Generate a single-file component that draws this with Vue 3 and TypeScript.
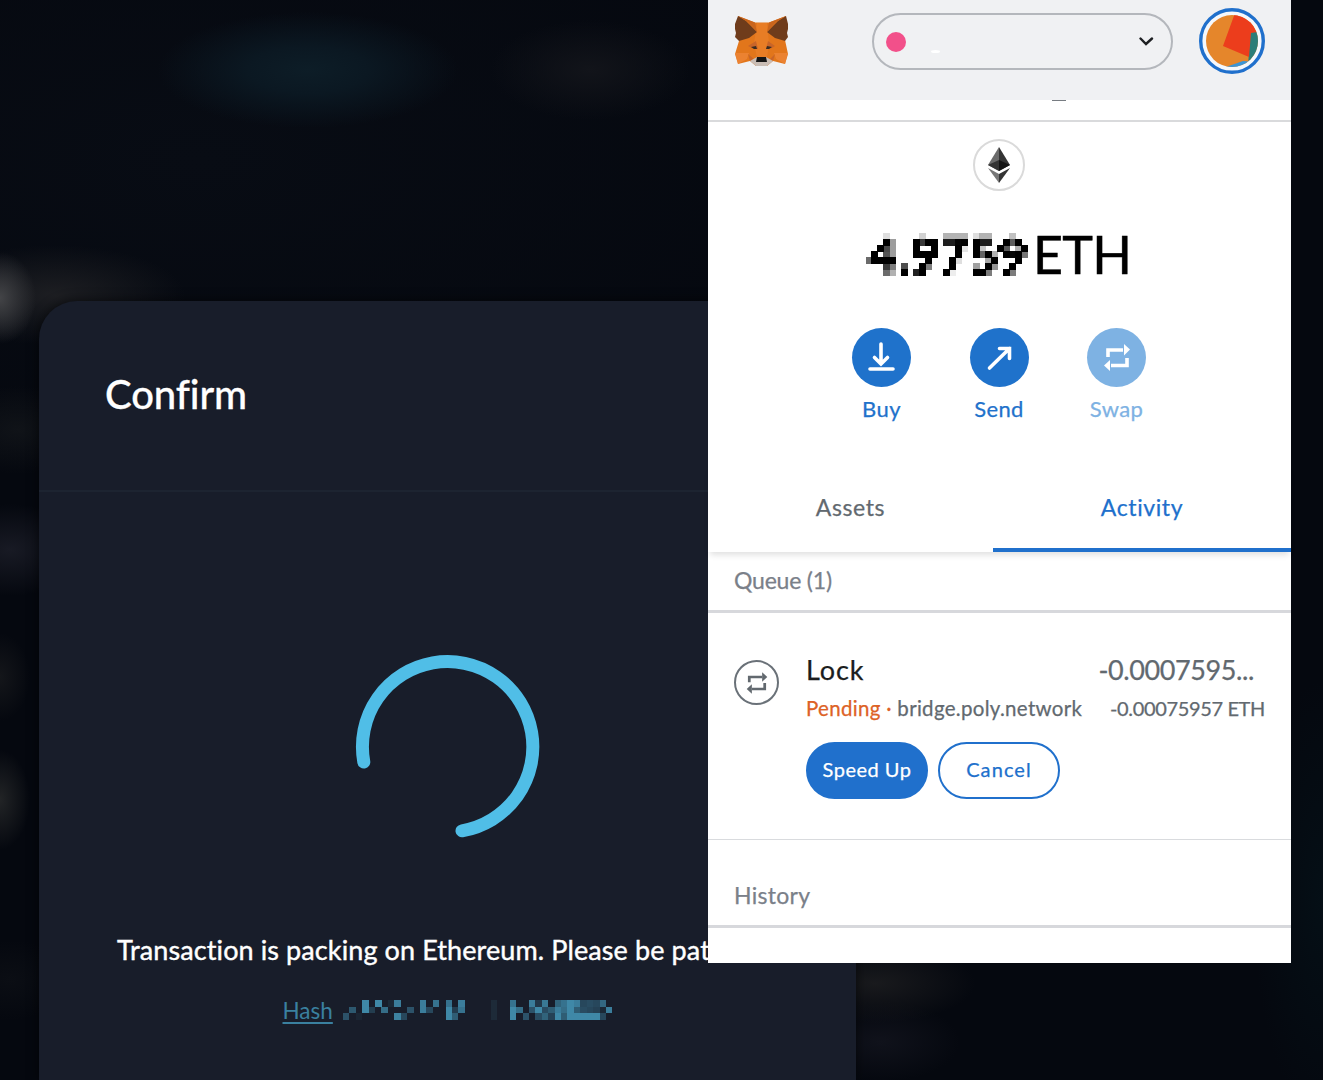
<script setup lang="ts">
type Cell = [col: number, row: number, opacity: number]

interface Action {
  label: string
  icon: 'buy' | 'send' | 'swap'
  disabled?: boolean
}

const actions: Action[] = [
  { label: 'Buy', icon: 'buy' },
  { label: 'Send', icon: 'send' },
  { label: 'Swap', icon: 'swap', disabled: true },
]

// Obscured part of the transaction hash, one entry per mosaic block.
const hashCells: Cell[] = [
  [0, 2, 0.5], [1, 1, 0.55], [2, 2, 0.08],
  [3, 0, 1], [3, 1, 1], [4, 1, 0.3], [5, 0, 1], [6, 1, 0.75], [7, 0, 0.1],
  [8, 0, 0.9], [8, 2, 0.95], [9, 2, 0.4], [10, 1, 0.5],
  [12, 0, 0.9], [12, 1, 0.9], [13, 1, 0.4], [14, 0, 0.8],
  [16, 0, 0.8], [16, 1, 1], [16, 2, 1], [17, 1, 0.3], [17, 2, 0.6], [18, 0, 0.9], [18, 1, 0.8],
  [23, 0, 0.12], [23, 1, 0.12], [23, 2, 0.12],
  [26, 0, 0.8], [26, 1, 1], [26, 2, 1], [27, 1, 0.75], [28, 2, 0.5],
  [29, 0, 0.9], [29, 1, 0.5], [30, 0, 0.25], [30, 1, 1], [31, 0, 0.85], [31, 1, 0.45], [31, 2, 0.65],
  [32, 1, 0.6], [30, 2, 0.45], [32, 2, 0.35], [33, 0, 0.65], [33, 1, 0.9], [33, 2, 1],
  [34, 0, 0.8], [34, 1, 0.75], [34, 2, 0.6], [35, 0, 1], [35, 1, 1], [35, 2, 1],
  [36, 0, 0.9], [36, 1, 0.6], [36, 2, 1], [37, 0, 0.4], [37, 1, 0.45], [37, 2, 1],
  [38, 0, 0.45], [38, 1, 0.4], [38, 2, 1], [39, 0, 0.4], [39, 1, 0.35], [39, 2, 1], [40, 0, 0.7], [40, 1, 0.1], [40, 2, 0.4], [41, 1, 0.9],
]
</script>

<template>
  <main class="screen">
    <section class="dialog">
      <header class="dialog-head"><h1>Confirm</h1></header>
      <div class="dialog-body">
        <svg class="spinner" width="186" height="186" viewBox="0 0 186 186">
          <path d="M8.8 108A85.2 85.2 0 1 1 107 176.8" />
        </svg>
        <p class="packing">Transaction is packing on Ethereum. Please be patient.</p>
        <div class="hash">
          <a>Hash</a>
          <svg width="275" height="20" viewBox="0 0 275 20" shape-rendering="crispEdges">
            <rect
              v-for="([col, row, opacity], i) in hashCells"
              :key="i"
              :x="col * 6.54"
              :y="row * 6.6"
              width="6.6"
              height="6.6"
              :opacity="opacity"
            />
          </svg>
        </div>
      </div>
    </section>

    <section class="wallet">
      <header class="topbar">
        <svg class="fox" width="56" height="52" viewBox="0 0 56 52">
          <path fill="#e2761b" d="M4 0 21 6.5H35L52 0 51 24 54 38 51 48 39 45 33 50H22L16 45 4 48 1 38 5 25Z" />
          <path fill="#ee8430" d="M23 7H33L35 27 33 42H23L20 27Z" opacity=".5" />
          <path fill="#6f3c1b" d="M4 0 12 5 23 16 15 22 5 25 1 21 2 17 1 13 1 8Z" />
          <path fill="#6f3c1b" d="M52 0 44 5 33 16 41 22 51 25 54 21 53 17 54 13 54 8Z" />
          <path fill="#c9651d" d="M4 0 21 6.5 23 16 14 6ZM52 0 35 6.5 33 16 42 6Z" />
          <path fill="#f0873a" opacity=".7" d="M1 37H15L13 43 4 48ZM54 37H40L42 43 51 48Z" />
          <path fill="#c96528" d="M14 30 22 25 24 33 18 32ZM41 30 34 25 32 33 38 32ZM14 38 20 43 16 45ZM41 38 36 43 39 45Z" />
          <path fill="#3a2c22" d="M17 31 22 30 23 33 20 33ZM38 31 33 30 32 33 35 33Z" />
          <path fill="#c9bdb5" d="M16 45 23 41H32L39 45 33 50H22Z" />
          <path fill="#161616" d="M23 41H32L33 46H22Z" />
        </svg>
        <div class="network">
          <i class="network-dot"></i>
          <i class="smudge"></i>
          <svg width="16" height="10" viewBox="0 0 16 10"><path d="M2.5 1.5 8 7 14 1.5" /></svg>
        </div>
        <svg class="avatar" width="66" height="66" viewBox="0 0 66 66">
          <defs><clipPath id="face"><circle cx="33" cy="33" r="26" /></clipPath></defs>
          <circle cx="33" cy="33" r="31.3" fill="#f5f8fc" stroke="#2070cc" stroke-width="3.4" />
          <g clip-path="url(#face)">
            <path fill="#e5862b" d="M0 0H66V66H0Z" />
            <path fill="#3b95d6" d="M24 60 44 53 56 54 50 66H24Z" />
            <path fill="#2b7d78" d="M51 24H66V60H49Z" />
            <path fill="#ec3d1c" d="M36 5 66 6 59 24 52 25 50 49 24 38Z" />
          </g>
        </svg>
      </header>
      <div class="accountbar"><i></i></div>

      <div class="overview">
        <div class="token">
          <svg width="22" height="36" viewBox="0 0 22 36">
            <path fill="#6b6b6b" d="M11 0V24L0 18Z" /><path fill="#343434" d="M11 0V24L22 18Z" />
            <path fill="#343434" d="M11 13 0 18 11 24Z" /><path fill="#141414" d="M11 13 22 18 11 24Z" />
            <path fill="#777" d="M0 21 11 27V36Z" /><path fill="#343434" d="M22 21 11 27V36Z" />
          </svg>
        </div>
        <div class="balance">
          <svg class="amount" width="164" height="64" viewBox="0 0 164 64">
            <defs>
              <filter id="pixelate" filterUnits="userSpaceOnUse" x="0" y="0" width="164" height="64">
                <feGaussianBlur in="SourceGraphic" stdDeviation="0.8" result="soft" />
                <feFlood x="2" y="2" width="1" height="1" flood-color="#000" />
                <feComposite width="6" height="6" />
                <feTile result="grid" />
                <feComposite in="soft" in2="grid" operator="in" />
                <feMorphology operator="dilate" radius="3" />
                <feComponentTransfer>
                  <feFuncA type="linear" slope="2.4" intercept="-0.5" />
                </feComponentTransfer>
              </filter>
            </defs>
            <text x="2" y="52" textLength="160" filter="url(#pixelate)">4.9759</text>
          </svg>
          <span class="unit">ETH</span>
        </div>
        <div class="actions">
          <div v-for="a in actions" :key="a.label" class="action" :class="{ disabled: a.disabled }">
            <span class="action-icon">
              <svg v-if="a.icon === 'buy'" width="28" height="32" viewBox="0 0 28 32">
                <path d="M13 2V21M6.5 15.500 13 22 19.500 15.500M2 27H25" />
              </svg>
              <svg v-else-if="a.icon === 'send'" width="28" height="28" viewBox="0 0 28 28">
                <path d="M4.500 24 24.500 4.500M14.500 4.500H24.500V14.500" />
              </svg>
              <svg v-else class="swap" width="28" height="28" viewBox="0 0 28 28">
                <path d="M5 13V6H20M24 14V21.500H8" /><path class="tip" d="M21 0 27 5.500 21 11.500ZM7 16 1 21.500 7 27Z" />
              </svg>
            </span>
            <span class="action-label">{{ a.label }}</span>
          </div>
        </div>
      </div>

      <nav class="tabs">
        <div class="tab">Assets</div>
        <div class="tab active">Activity</div>
      </nav>

      <div class="group queue"><span>Queue (1)</span></div>
      <article class="tx">
        <span class="tx-icon">
          <svg class="swap" width="24" height="24" viewBox="0 0 28 28">
            <path d="M5 13V7H20M23 14V21H8" /><path class="tip" d="M20 1.500 26 7 20 12.500ZM8 15.500 2 21 8 26.500Z" />
          </svg>
        </span>
        <div class="tx-main">
          <div class="tx-line">
            <h2>Lock</h2><span class="tx-amount">-0.0007595...</span>
          </div>
          <div class="tx-sub">
            <span class="tx-origin"><b>Pending · </b>bridge.poly.network</span>
            <span class="tx-eth">-0.00075957 ETH</span>
          </div>
          <div class="tx-buttons">
            <button class="primary">Speed Up</button>
            <button class="cancel">Cancel</button>
          </div>
        </div>
      </article>
      <div class="group history"><span>History</span></div>
    </section>
  </main>
</template>

<style>
body {
  margin: 0;
  overflow: hidden;
}
</style>

<style scoped>
.screen {
  position: relative;
  box-sizing: border-box;
  width: 1323px;
  height: 1080px;
  padding: 301px 0 0 39px;
  overflow: hidden;
  font-family: Lato, "Open Sans", sans-serif;
  font-variant-ligatures: none;
  background:
    radial-gradient(ellipse 150px 58px at 308px 70px, #0d1d27 0, #0b1822 40%, transparent 100%),
    radial-gradient(ellipse 100px 50px at 590px 70px, #12141a 0, transparent 100%),
    radial-gradient(ellipse 36px 46px at 0 298px, #434447 0, transparent 100%),
    radial-gradient(ellipse 130px 50px at 55px 295px, #1d1e22 0, transparent 100%),
    radial-gradient(ellipse 75px 44px at 18px 430px, #101318 0, transparent 100%),
    radial-gradient(ellipse 75px 46px at 10px 550px, #181a24 0, transparent 100%),
    radial-gradient(ellipse 30px 44px at 0 677px, #14161a 0, transparent 100%),
    radial-gradient(ellipse 30px 50px at 0 800px, #222426 0, transparent 100%),
    radial-gradient(ellipse 60px 40px at 10px 980px, #0b0e14 0, transparent 100%),
    radial-gradient(ellipse 100px 40px at 875px 983px, #191a1d 0, transparent 100%),
    radial-gradient(ellipse 80px 40px at 880px 1042px, #10121b 0, transparent 100%),
    radial-gradient(ellipse 70px 220px at 1323px 900px, #050f16 0, transparent 100%),
    radial-gradient(ellipse 700px 320px at 200px 160px, #080c14 0, transparent 100%),
    #05080f;
}

.dialog {
  width: 817px;
  height: 779px;
  border-radius: 38px 38px 0 0;
  background: #181d2a;
  box-shadow: 0 0 12px rgba(0, 0, 0, 0.6);
  color: #fff;
}

.dialog-head {
  box-sizing: border-box;
  height: 191px;
  padding: 68px 66px 0;
  border-bottom: 2px solid #1d2431;
}

h1 {
  margin: 0;
  font-size: 40px;
  line-height: 50px;
  font-weight: 500;
  letter-spacing: -0.1px;
  -webkit-text-stroke: 0.3px #fff;
}

.dialog-body {
  display: flex;
  flex-direction: column;
  align-items: center;
  padding-top: 162px;
}

.spinner path {
  fill: none;
  stroke: #50bee7;
  stroke-width: 13;
  stroke-linecap: round;
}

.packing {
  width: 661px;
  margin: 92px 0 0;
  font-size: 27px;
  line-height: 36px;
  letter-spacing: 0.1px;
  white-space: nowrap;
  -webkit-text-stroke: 0.4px #fff;
}

.hash {
  display: flex;
  align-items: flex-start;
  gap: 10px;
  margin-top: 27px;
  width: 330px;
  color: #3a809f;
}

.hash a {
  width: 51px;
  font-size: 22.5px;
  line-height: 31px;
  text-decoration: underline;
  text-underline-offset: 3px;
}

.hash svg {
  margin-top: 5px;
  fill: #3f88a7;
}

.wallet {
  position: absolute;
  top: 0;
  left: 708px;
  width: 583px;
  height: 963px;
  background: #fff;
  -webkit-text-stroke: 0.25px currentColor;
}

.topbar {
  display: flex;
  box-sizing: border-box;
  height: 100px;
  padding: 8px 26px 0;
  background: #f0f1f3;
}

.fox {
  margin-top: 8px;
}

.network {
  position: relative;
  display: flex;
  align-items: center;
  justify-content: space-between;
  box-sizing: border-box;
  width: 301px;
  height: 57px;
  margin: 5px 26px 0 82px;
  padding: 0 17px 0 12px;
  border: 2px solid #b4b7bc;
  border-radius: 29px;
}

.network-dot {
  width: 20px;
  height: 20px;
  border-radius: 50%;
  background: #f2508a;
}

.smudge {
  position: absolute;
  left: 57px;
  top: 35px;
  width: 9px;
  height: 3px;
  border-radius: 50%;
  background: #fff;
}

.network svg path {
  fill: none;
  stroke: #1d1f22;
  stroke-width: 2.4;
  stroke-linecap: round;
}

.accountbar {
  box-sizing: border-box;
  height: 22px;
  border-bottom: 2px solid #d9dadc;
}

.accountbar i {
  display: block;
  width: 14px;
  height: 1px;
  margin-left: 344px;
  background: #777c82;
}

.overview {
  display: flex;
  flex-direction: column;
  align-items: center;
  height: 343px;
  padding-right: 1px;
}

.token {
  display: flex;
  align-items: center;
  justify-content: center;
  box-sizing: border-box;
  width: 52px;
  height: 52px;
  margin-top: 17px;
  border: 2px solid #dadada;
  border-radius: 50%;
}

.balance {
  display: flex;
  align-items: center;
  gap: 3px;
  height: 64px;
  margin-top: 31px;
  color: #000;
}

.amount text {
  font-size: 52px;
  font-weight: 700;
}

.unit {
  width: 99px;
  font-size: 52px;
  line-height: 62px;
  letter-spacing: -0.8px;
  -webkit-text-stroke: 0.5px #000;
}

.actions {
  display: flex;
  gap: 32.5px;
  margin-top: 42px;
}

.action {
  display: flex;
  flex-direction: column;
  align-items: center;
  width: 85px;
  color: #1f72cb;
}

.action-icon {
  display: flex;
  align-items: center;
  justify-content: center;
  width: 59px;
  height: 59px;
  border-radius: 50%;
  background: currentColor;
}

.action-icon svg path {
  fill: none;
  stroke: #fff;
  stroke-width: 3.6;
  stroke-linecap: round;
}

.action-label {
  margin-top: 7px;
  font-size: 22px;
  line-height: 30px;
  letter-spacing: 0.4px;
}

.action.disabled {
  color: #7eb2e3;
}

.swap path {
  fill: none;
  stroke: currentColor;
  stroke-width: 3.2;
}

.action-icon .swap path {
  stroke-linecap: butt;
}

.action-icon .swap .tip {
  fill: #fff;
  stroke: none;
}

.swap .tip {
  fill: currentColor;
  stroke: none;
}

.tabs {
  display: flex;
  height: 87px;
  box-shadow: 0 5px 6px -2px rgba(0, 0, 0, 0.12);
}

.tab {
  box-sizing: border-box;
  width: 285px;
  padding-top: 27px;
  font-size: 23px;
  line-height: 30px;
  letter-spacing: 0.6px;
  text-align: center;
  color: #62696f;
}

.tab.active {
  width: 298px;
  border-bottom: 4px solid #2070cc;
  color: #2070cc;
}

.group {
  box-sizing: border-box;
  padding-left: 26px;
  border-bottom: 3px solid #d7d8dc;
  font-size: 23px;
  line-height: 30px;
  color: #7a8089;
}

.queue {
  height: 61px;
  padding-top: 13px;
  letter-spacing: -0.2px;
}

.history {
  height: 88px;
  padding-top: 40px;
  letter-spacing: 0.3px;
}

.tx {
  display: flex;
  box-sizing: border-box;
  height: 227px;
  padding: 40px 26px 0;
  border-bottom: 1px solid #d9dbde;
}

.tx-icon {
  display: flex;
  align-items: center;
  justify-content: center;
  box-sizing: border-box;
  width: 45px;
  height: 45px;
  margin: 7px 27px 0 0;
  border: 2px solid #6a7178;
  border-radius: 50%;
  color: #62696f;
}

.tx-main {
  width: 459px;
}

.tx-line,
.tx-sub {
  display: flex;
  justify-content: space-between;
  white-space: nowrap;
  color: #62696f;
}

.tx-line {
  padding-right: 11px;
  font-size: 27px;
  line-height: 34px;
}

.tx-amount {
  letter-spacing: -0.4px;
}

h2 {
  margin: 0;
  font-size: 27px;
  font-weight: 400;
  letter-spacing: 0.9px;
  color: #1b1d20;
}

.tx-sub {
  margin-top: 7px;
  font-size: 20px;
  line-height: 28px;
}

.tx-origin {
  font-size: 20.5px;
  letter-spacing: 0.3px;
}

.tx-eth {
  letter-spacing: -0.35px;
}

.tx-sub b {
  font-weight: 400;
  color: #dd6226;
}

.tx-buttons {
  display: flex;
  gap: 10px;
  margin-top: 20px;
}

button {
  box-sizing: border-box;
  width: 122px;
  height: 57px;
  padding: 0 0 3px;
  border: 2px solid #2070cc;
  border-radius: 29px;
  background: #fff;
  color: #2070cc;
  font: 20px Lato, sans-serif;
  letter-spacing: 0.5px;
  -webkit-text-stroke: 0.25px currentColor;
}

button.primary {
  background: #2070cc;
  color: #fff;
}

button.cancel {
  letter-spacing: 1.1px;
}
</style>
